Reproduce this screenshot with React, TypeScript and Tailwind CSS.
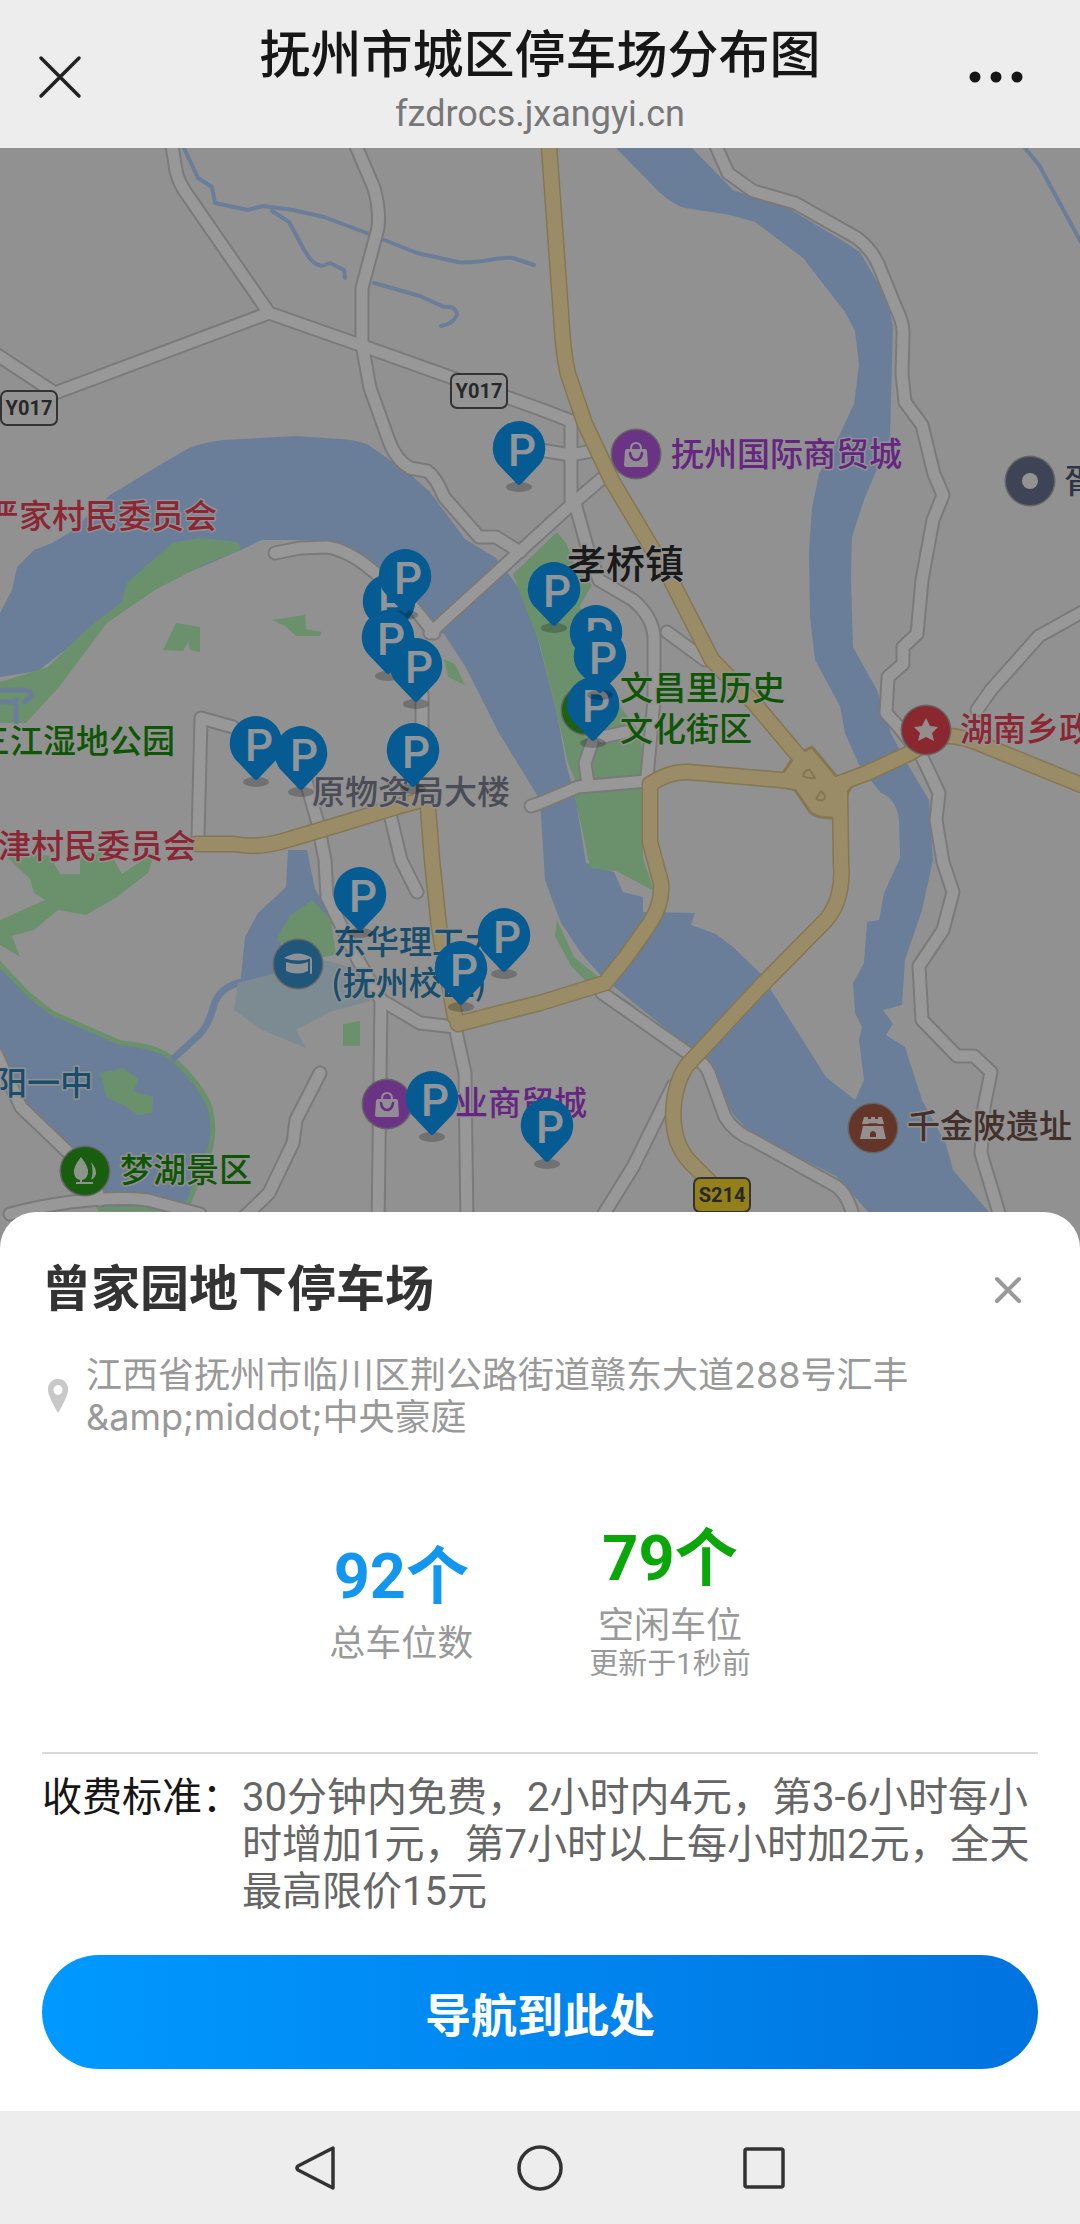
import { useState } from 'react'

// Map artwork shares one coordinate space: 1080 wide, 148..1248 vertically
const MAP_TOP = 148
const MAP_WIDTH = 1080
const MAP_HEIGHT = 1100

const streams = [
  'M184 148L198 178L212 187L215 203L248 210L263 206L293 210L324 217L372 235L417 253L458 262C480 264 500 256 513 258L534 265',
  'M272 211L289 222L303 248C308 256 312 264 322 266L330 263L344 270L345 278',
  'M374 283L420 296L444 307Q456 305 457 315Q453 324 441 326',
  'M1025 148L1039 165L1082 244',
]

const whiteRoads = [
  'M172 146L175 164Q176 177 184 190L269 313',
  'M-4 354L55 393L269 313L363 346L540 409L571 421L571 501',
  'M356 146L374 188Q380 209 378 228L362 288L362 344L370 388L389 441Q396 460 410 468L427 471Q436 477 444 497L479 537L496 537L520 552',
  'M540 450L571 455L597 450',
  'M606 475L571 505L430 633',
  'M575 503L588 550L599 580L633 600Q652 616 654 636L654 700L647 777',
  'M667 632L705 660',
  'M647 781L578 787L540 803L531 806',
  'M592 743L585 763L588 784',
  'M626 732L602 737',
  'M716 146L728 173L753 191L795 203L857 238Q874 251 881 271L896 308Q904 324 903 335L902 374L905 402L922 425L934 474L943 495L933 520L922 580L917 634L903 647L903 664L888 677L886 713L898 726L922 757L939 793L936 820L943 862L953 892L943 930L919 966L922 1020L957 1056L974 1056L991 1072L984 1107L981 1153L1004 1230',
  'M1084 611L1039 636L991 690L977 710',
  'M602 993L692 1056Q705 1063 709 1073L725 1117Q735 1133 753 1140L836 1186Q850 1196 855 1225',
  'M673 1086L633 1167L600 1220',
  'M233 727L201 718L198 837',
  'M306 781L317 820L325 860L327 897L358 960L381 1000L378 1225',
  'M389 810L401 860L417 892',
  'M422 694L422 733',
  'M381 1000L420 1023L455 1027L465 1073L467 1225',
  'M320 1073L296 1120L293 1143L269 1193L236 1225',
  'M-4 1053L21 1107L69 1153L93 1180L100 1200',
  'M10 1214Q90 1194 148 1200L200 1214',
  'M275 553L300 548L327 547Q350 550 379 576',
  'M404 596L418 613L434 633',
]

const yellowRoads = [
  'M549 146L561 314Q563 353 568 374L585 424L612 481L671 580L712 660L754 703L802 760L838 796',
  'M196 844L234 844Q260 849 290 839L344 823L396 807L429 798',
  'M427 795L432 860L439 927L455 1017',
  'M458 1024Q500 1013 540 1003L605 983L626 957L650 923Q663 903 661 883L650 842L650 784Q670 771 688 772L781 780L819 785',
  'M832 786L867 773L908 754L940 736Q960 734 988 747L1084 786',
  'M840 790L841 862Q844 899 826 920L760 987L692 1060Q678 1073 674 1102Q670 1141 690 1162L712 1184',
]

const greens = [
  'M241 550L238 542L200 538L172 543L127 583L122 602L86 630L48 667L0 682V723H26L59 687L107 623L155 590L207 563Z',
  'M176 623L200 627L200 652L190 650L188 642L183 651L163 650Z',
  'M272 620L305 615L306 629L322 632L320 636L296 636L285 626Z',
  'M444 659L455 664L465 685L448 677Z',
  'M513 574L557 532L566 543L576 568L592 585L580 606L590 635L610 694L640 732L645 776L578 787L568 763L557 713L540 645Z',
  'M574 793L642 786L643 858L654 891L616 871L590 868L582 829Z',
  'M557 920L574 957L602 980L588 983L571 966L555 936Z',
  'M609 989L640 1009L615 997Z',
  'M312 900L331 920L336 955L310 959L276 940L290 916Z',
  'M343 1024L360 1021V1046H343Z',
  'M0 920L45 900L34 893L30 879L8 858L20 852L50 856L60 874H80V852H110L122 874L155 852L148 873L117 897L86 915L58 910L34 930L12 936L20 957L0 945Z',
]

const pins = [
  { x: 519, y: 448 },
  { x: 389, y: 601 },
  { x: 405, y: 576 },
  { x: 388, y: 637 },
  { x: 416, y: 665 },
  { x: 256, y: 743 },
  { x: 301, y: 753 },
  { x: 413, y: 750 },
  { x: 554, y: 589 },
  { x: 596, y: 632 },
  { x: 593, y: 704 },
  { x: 600, y: 656 },
  { x: 360, y: 894 },
  { x: 504, y: 935 },
  { x: 461, y: 968 },
  { x: 432, y: 1098 },
  { x: 547, y: 1125 },
]

const labels = [
  { text: '抚州国际商贸城', x: 671, y: 452, color: '#a93fd8' },
  { text: '胥', x: 1064, y: 479, color: '#4e5878' },
  { text: '严家村民委员会', x: -14, y: 514, color: '#ea4058' },
  { text: '三江湿地公园', x: -23, y: 739, color: '#189008' },
  { text: '津村民委员会', x: -2, y: 844, color: '#ea4058' },
  { text: '原物资局大楼', x: 312, y: 790, color: '#7c8090' },
  { text: '文昌里历史', x: 620, y: 686, color: '#189008' },
  { text: '文化街区', x: 620, y: 727, color: '#189008' },
  { text: '湖南乡政', x: 960, y: 727, color: '#ea4058' },
  { text: '东华理工大', x: 333, y: 940, color: '#2880b4' },
  { text: '(抚州校区)', x: 331, y: 981, color: '#2880b4' },
  { text: '阳一中', x: -6, y: 1081, color: '#2880b4' },
  { text: '业商贸城', x: 455, y: 1101, color: '#a93fd8' },
  { text: '梦湖景区', x: 120, y: 1168, color: '#189008' },
  { text: '千金陂遗址', x: 907, y: 1124, color: '#6e504a' },
]

const shields = [
  { text: 'Y017', x: 450, y: 373, fill: '#f6f6f6' },
  { text: 'Y017', x: 0, y: 390, fill: '#f6f6f6' },
  { text: 'S214', x: 693, y: 1177, fill: '#f5d52c' },
]

const Bag = () => (
  <>
    <path d="M-9 -5H9Q11 -5 11 -3L12 11Q12 13 10 13H-10Q-12 13 -12 11L-11 -3Q-11 -5 -9 -5Z" fill="#f4e9f8" />
    <path d="M-5 -5Q-5 -11 0 -11Q5 -11 5 -5" fill="none" stroke="#f4e9f8" strokeWidth="2" />
    <path d="M-6 -1Q-5 6 0 6Q5 6 6 -1" fill="none" stroke="#a84fd4" strokeWidth="2.5" />
  </>
)

const Poi = ({ x, y, color, children }: { x: number; y: number; color: string; children?: React.ReactNode }) => (
  <g transform={`translate(${x} ${y})`}>
    <circle r="25.5" fill="#a8a8a8" />
    <circle r="24" fill={color} />
    {children}
  </g>
)

const MapArtwork = () => (
  <svg
    className="block h-full w-full font-['Noto_Sans_CJK_SC',sans-serif]"
    viewBox={`0 ${MAP_TOP} ${MAP_WIDTH} ${MAP_HEIGHT}`}
    strokeLinejoin="round"
    strokeLinecap="round"
  >
    <rect y={MAP_TOP} width={MAP_WIDTH} height={MAP_HEIGHT} fill="#f2f2f2" />

    {/* Water */}
    <g fill="#b3d2ff">
      <path d="M616 148L659 192Q672 204 685 208L730 215L755 222L803 258L845 312L855 331L859 365L854 404L840 434L819 474L812 508L809 550L810 617L815 660L840 706L845 733L860 767L881 793Q896 798 899 820L900 858L884 893L879 920L867 922L864 963L853 983L855 1013L862 1027L859 1040L864 1080L855 1100L826 1077L809 1050L771 990L760 973L733 947L716 934L691 925L695 913L643 912L643 897L623 892L614 872L586 863L576 800L566 763L557 713L540 647L527 600L511 577L496 558L465 539L430 492L410 474L367 444Q355 440 341 439L296 436L224 440Q205 442 189 448L158 466L110 495L69 533L52 543L34 550L17 567L12 590L0 613V677L38 671L69 647L124 600L241 550L262 540L320 540L362 557L389 583L424 623L444 634L465 666L499 733L540 800L545 880L561 923L581 953L602 977L692 1050L712 1073L733 1114L750 1133L836 1176L880 1225H1000L953 1170L946 1144L922 1100L905 1047L886 1035L893 1024L883 1010L902 1005L905 960L922 910L933 860L929 800L905 760L891 733L877 690L853 647L851 577L852 537L864 500L890 438L893 328L888 301L860 252L843 241L788 208L733 190L692 148Z" />
      <path d="M288 850H307L315 889L333 918L317 923L282 937L276 984L240 986L245 937L258 913L286 887Z" />
      <path
        d="M-6 958L28 994L52 1013L121 1043Q160 1046 175 1061Q200 1083 210 1107Q218 1141 203 1167L186 1209H100L62 1137L21 1091L-6 1055Z"
        stroke="#b1f2b4"
        strokeWidth="5"
      />
    </g>
    <path d="M-6 1053L21 1091L62 1137L100 1198" fill="none" stroke="#b3d2ff" strokeWidth="8" />
    <path d="M174 1058L200 1034Q209 1024 214 1005Q220 986 243 982" fill="none" stroke="#b3d2ff" strokeWidth="7" />
    <g fill="none" stroke="#b3d2ff" strokeWidth="4">
      {streams.map((d) => <path key={d} d={d} />)}
    </g>

    {/* Campus and parks */}
    <path d="M238 983L324 960L362 970L370 1001L330 1012L296 1030L306 1048L262 1030L234 1010Z" fill="#cfe8f4" />
    <g fill="#b1f2b4">
      {greens.map((d) => <path key={d} d={d} />)}
      <path d="M100 1073L124 1068L139 1080L133 1091L153 1097L152 1113L138 1115L124 1105L107 1098Z" />
    </g>
    <path d="M0 690H18Q32 690 32 696L24 702M16 700V722M0 702H12" fill="none" stroke="#b3d2ff" strokeWidth="5" />

    {/* Roads */}
    <g fill="none" stroke="#cbcbcb" strokeWidth="15">
      {whiteRoads.map((d) => <path key={d} d={d} />)}
    </g>
    <g fill="none" stroke="#fdfdfd" strokeWidth="11">
      {whiteRoads.map((d) => <path key={d} d={d} />)}
    </g>
    <g fill="none" stroke="#dcc68a" strokeWidth="17">
      {yellowRoads.map((d) => <path key={d} d={d} />)}
    </g>
    <path
      d="M812 747L837 777L862 772L848 792L840 820L832 818Q816 818 810 812L795 790L776 784L783 773L795 755Z"
      fill="#ffe9aa"
      stroke="#dcc68a"
      strokeWidth="3"
    />
    <g fill="none" stroke="#ffe9aa" strokeWidth="14">
      {yellowRoads.map((d) => <path key={d} d={d} />)}
    </g>
    <path
      d="M803 776Q805 769 810 770L815 778Q808 779 803 776ZM821 791Q828 797 823 800Q815 801 817 797Z"
      fill="#ffe9aa"
      stroke="#dcc68a"
      strokeWidth="2"
    />

    {/* Road shields */}
    {shields.map((s) => (
      <g key={`${s.x}-${s.y}`} transform={`translate(${s.x} ${s.y})`}>
        <rect x="1" y="1" width="56" height="34" rx="6" fill={s.fill} stroke="#555" strokeWidth="2" />
        <text x="29" y="25" textAnchor="middle" fontSize="20" fontWeight="700" fill="#444" fontFamily="Roboto, sans-serif">
          {s.text}
        </text>
      </g>
    ))}

    {/* Points of interest */}
    <Poi x={636} y={454} color="#b356dc"><Bag /></Poi>
    <Poi x={387} y={1104} color="#b356dc"><Bag /></Poi>
    <Poi x={1030} y={481} color="#69708f"><circle r="8" fill="#f4f4f4" /></Poi>
    <Poi x={926} y={730} color="#e8434f">
      <path d="M0 -12L4 -4L12 -3L6 3L8 11L0 7L-8 11L-6 3L-12 -3L-4 -4Z" fill="#f8eaea" />
    </Poi>
    <Poi x={586} y={710} color="#2fa31c" />
    <Poi x={298} y={964} color="#3490cc">
      <path d="M-14 -6Q0 -15 14 -6Q0 -1 -14 -6ZM-12 -2Q0 2 10 -2V7Q0 12 -12 7Z" fill="#eaf4fa" />
      <path d="M13 -5V9" stroke="#eaf4fa" strokeWidth="2" />
    </Poi>
    <Poi x={85} y={1171} color="#2a9c18">
      <path d="M-4 -14Q4 -4 3 2Q2 8 -3 9V11H8V13H-9V11H-5V9Q-10 8 -11 2Q-12 -4 -4 -14ZM6 -9Q16 3 6 9Q9 1 6 -9Z" fill="#eaf8e8" />
    </Poi>
    <Poi x={873} y={1128} color="#a65a45">
      <path d="M-9 -11H-5V-9H-2V-11H2V-9H5V-11H9L11 -4H-11ZM-10 -2H10L13 11H-13Z" fill="#f8efec" />
      <path d="M-4 -4H4" stroke="#a65a45" strokeWidth="1.5" />
      <path d="M-3 9V5Q0 1 3 5V9Z" fill="#a65a45" />
    </Poi>

    {/* Place names */}
    <g fontSize="33" fontWeight="500" stroke="#f2f2f2" strokeWidth="3" paintOrder="stroke" dominantBaseline="central">
      {labels.map((l) => (
        <text key={l.text} x={l.x} y={l.y} fill={l.color}>{l.text}</text>
      ))}
      <text x="567" y="561" fontSize="39" fill="#2c2c2c">孝桥镇</text>
    </g>
  </svg>
)

const App = () => {
  const [open, setOpen] = useState(true)

  return (
    <div className="flex min-h-screen flex-col bg-[#ededed] font-[Roboto,'Noto_Sans_CJK_SC',sans-serif]">
      {/* Header */}
      <header className="flex h-[148px] shrink-0 items-center justify-between px-9">
        <button aria-label="关闭页面" className="mt-1.5 flex w-[76px]">
          <svg viewBox="0 0 46 46" className="h-[46px] w-[46px]" stroke="#222" strokeWidth="3.5" strokeLinecap="round">
            <path d="M5 4L43 42M43 4L5 42" />
          </svg>
        </button>
        <div className="flex flex-col items-center pt-4">
          <h1 className="text-[51px] leading-[64px] font-medium text-[#161616]">抚州市城区停车场分布图</h1>
          <p className="text-[36px] leading-[52px] text-[#777]">fzdrocs.jxangyi.cn</p>
        </div>
        <button aria-label="更多" className="mt-1.5 flex w-[76px] justify-end">
          <svg viewBox="0 0 56 12" className="mr-5 h-3 w-14" fill="#161616">
            <circle cx="7" cy="6" r="5.5" />
            <circle cx="28" cy="6" r="5.5" />
            <circle cx="49" cy="6" r="5.5" />
          </svg>
        </button>
      </header>

      {/* Map */}
      <main className="relative aspect-[1080/1100] w-full overflow-hidden">
        <MapArtwork />
        {pins.map((p) => (
          <button
            key={`${p.x}-${p.y}`}
            aria-label="停车场"
            onClick={() => setOpen(true)}
            className="absolute -mt-7 -ml-7 h-[76px] w-14"
            style={{ left: `${(p.x / MAP_WIDTH) * 100}%`, top: `${((p.y - MAP_TOP) / MAP_HEIGHT) * 100}%` }}
          >
            <svg viewBox="0 0 56 76" className="h-full w-full">
              <ellipse cx="28" cy="67" rx="13" ry="5" fill="#000" opacity="0.22" />
              <path d="M28 1A27 27 0 0 1 49 44L30 64Q28 66 26 64L7 44A27 27 0 0 1 28 1Z" fill="#0a98f4" />
              <text x="31" y="46" textAnchor="middle" fontSize="44" fontWeight="500" fill="#f0f8ff" fontFamily="Roboto, sans-serif">P</text>
            </svg>
          </button>
        ))}
        {open && <div className="absolute inset-0 bg-black/40"></div>}
      </main>

      {/* Parking lot sheet */}
      {open && (
        <section className="relative -mt-9 flex flex-col rounded-t-[36px] bg-white px-[42px] pt-12 pb-[42px]">
          <div className="flex items-center justify-between">
            <h2 className="text-[49px] leading-[60px] font-bold text-[#333]">曾家园地下停车场</h2>
            <button aria-label="关闭" onClick={() => setOpen(false)} className="mr-4">
              <svg viewBox="0 0 28 28" className="h-7 w-7" stroke="#999" strokeWidth="4" strokeLinecap="round">
                <path d="M3 3L25 25M25 3L3 25" />
              </svg>
            </button>
          </div>

          <div className="mt-[34px] flex items-center gap-[18px]">
            <svg viewBox="0 0 20 34" className="ml-1.5 h-[34px] w-5 shrink-0">
              <path
                d="M10 0A10 10 0 0 1 20 11Q20 17 10 34Q0 17 0 11A10 10 0 0 1 10 0ZM10 6A4.5 5 0 1 0 10 16A4.5 5 0 1 0 10 6Z"
                fill="#c8c8c8"
                fillRule="evenodd"
              />
            </svg>
            <p className="font-[Inter,'Noto_Sans_CJK_SC',sans-serif] text-[36px] leading-[42px] text-[#999]">
              江西省抚州市临川区荆公路街道赣东大道288号汇丰
              <br />
              {'&amp;middot;中央豪庭'}
            </p>
          </div>

          <div className="mt-[74px] flex items-center justify-center gap-[116px] text-center text-[#999]">
            <div>
              <div className="text-[63px] leading-[94px] font-bold text-[#1296f0]">92个</div>
              <div className="text-[36px] leading-10">总车位数</div>
            </div>
            <div>
              <div className="text-[63px] leading-[94px] font-bold text-[#0aa60a]">79个</div>
              <div className="text-[36px] leading-10">空闲车位</div>
              <div className="text-[29px] leading-9">更新于1秒前</div>
            </div>
          </div>

          <div className="mt-[70px] flex border-t-2 border-[#d9d9d9] pt-5 text-[40px] leading-[47px]">
            <span className="shrink-0 text-[#161616]">收费标准：</span>
            <p className="flex-1 text-[#666]">30分钟内免费，2小时内4元，第3-6小时每小时增加1元，第7小时以上每小时加2元，全天最高限价15元</p>
          </div>

          <button className="mt-10 h-[114px] w-full rounded-full bg-linear-to-r from-[#0099ff] to-[#0073df] pt-2 text-[46px] font-bold text-white">
            导航到此处
          </button>
        </section>
      )}

      {/* System navigation */}
      <nav className="mt-auto flex h-28 shrink-0 items-center justify-center gap-44">
        <button aria-label="返回">
          <svg viewBox="0 0 48 48" className="h-12 w-12" fill="none" stroke="#333" strokeWidth="3.5" strokeLinejoin="round">
            <path d="M41 4V44L6 26Q4 24 6 22Z" />
          </svg>
        </button>
        <button aria-label="主页">
          <svg viewBox="0 0 48 48" className="h-12 w-12" fill="none" stroke="#333" strokeWidth="3.5">
            <circle cx="24" cy="24" r="21" />
          </svg>
        </button>
        <button aria-label="最近任务">
          <svg viewBox="0 0 48 48" className="h-12 w-12" fill="none" stroke="#333" strokeWidth="3.5">
            <rect x="5" y="5" width="38" height="38" rx="2" />
          </svg>
        </button>
      </nav>
    </div>
  )
}

export default App
